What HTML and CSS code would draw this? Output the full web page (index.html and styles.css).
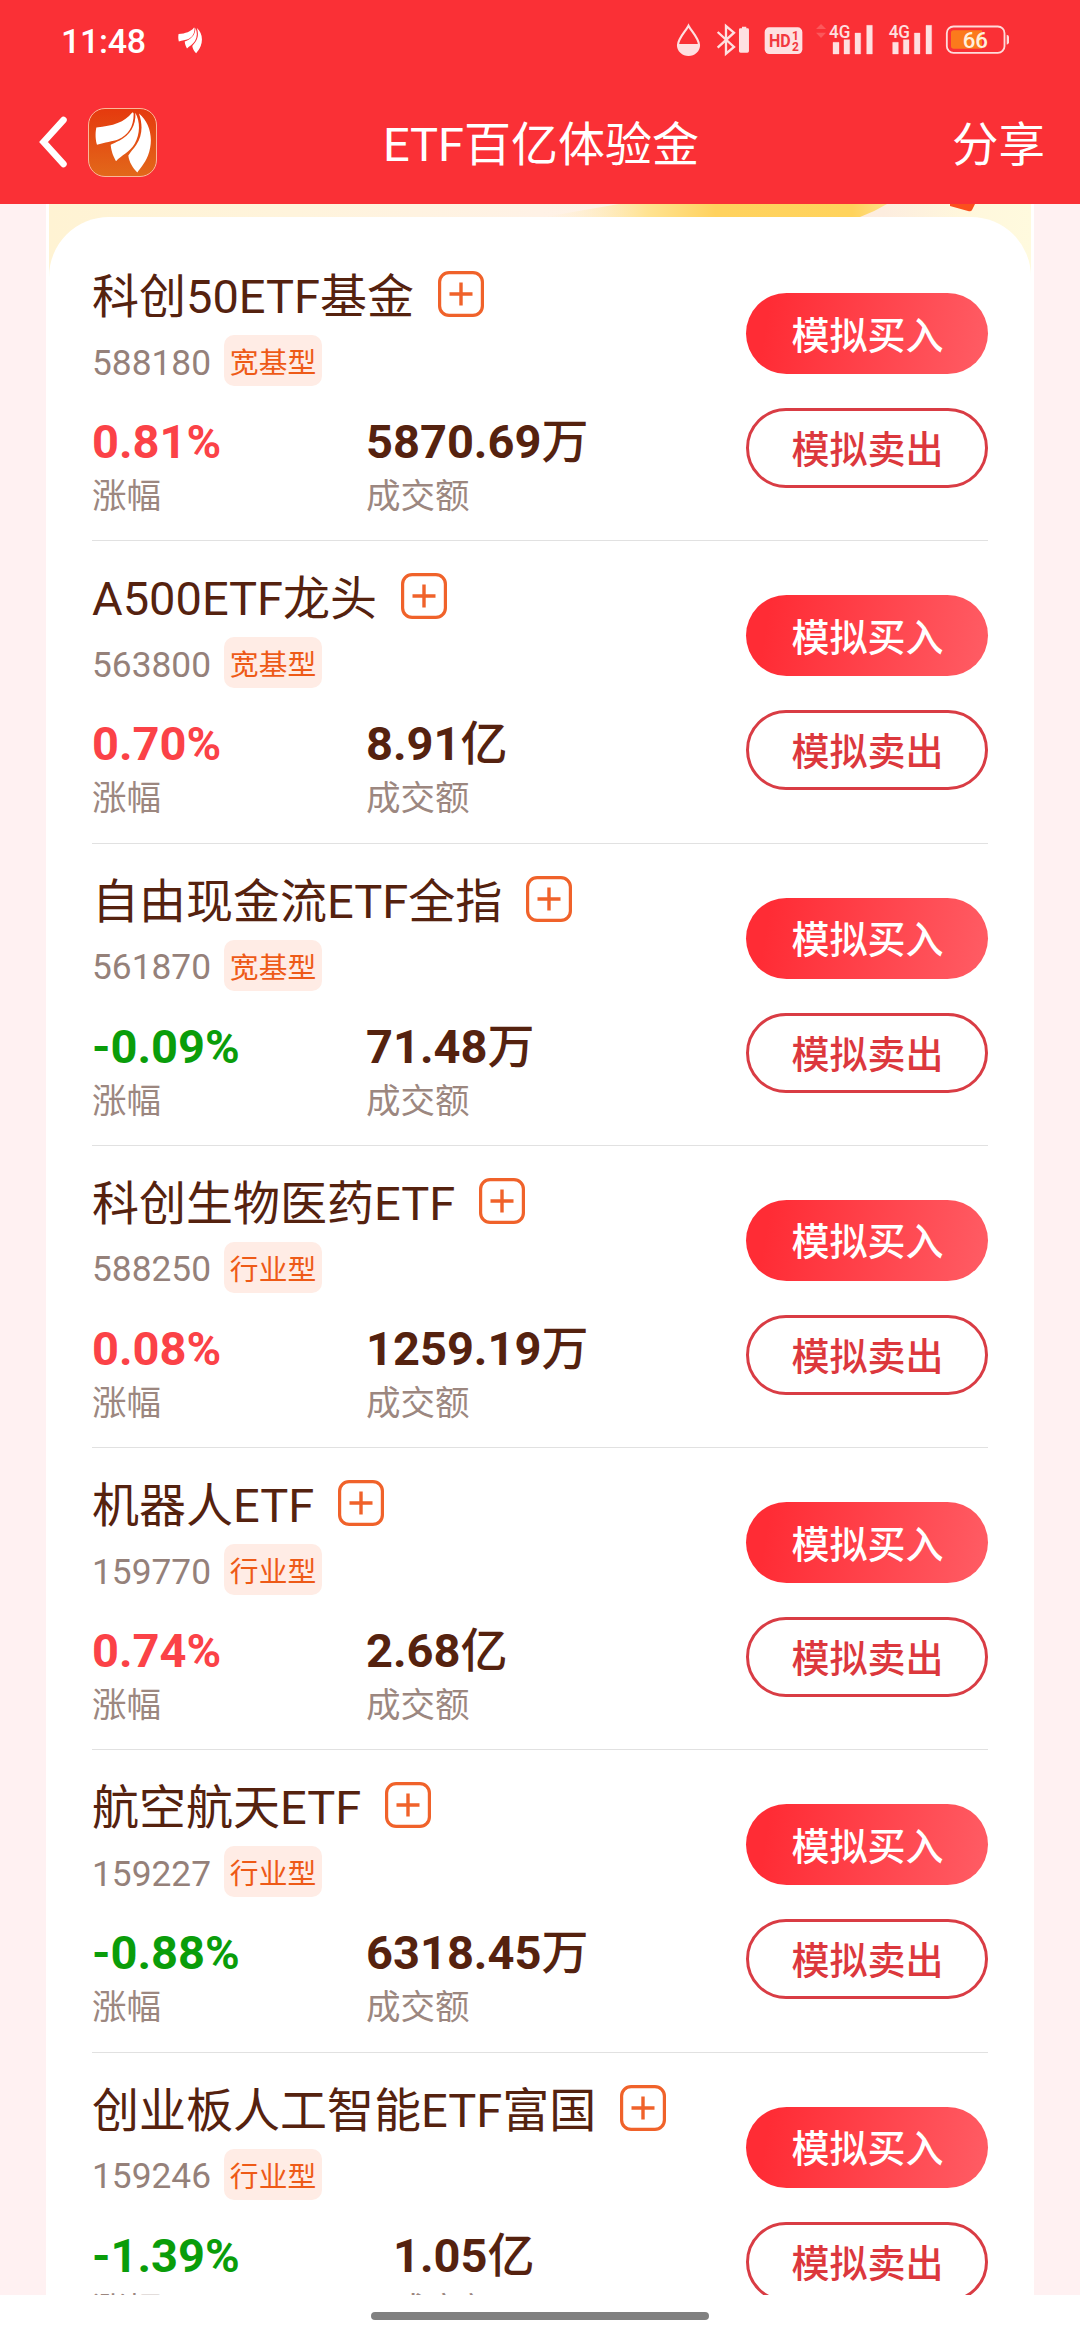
FILE: index.html
```html
<!DOCTYPE html>
<html lang="zh-CN">
<head>
<meta charset="utf-8">
<title>ETF百亿体验金</title>
<link rel="stylesheet" href="styles.css">
</head>
<body>
<svg class="defs" aria-hidden="true">
  <symbol id="plus" viewBox="0 0 46 46">
    <rect x="1.6" y="1.6" width="42.8" height="42.8" rx="9.5" fill="none" stroke="#f0622a" stroke-width="3.2"/>
    <path d="M23 11.5V34.5M11.500 23H34.500" fill="none" stroke="#f0622a" stroke-width="3.400"/>
  </symbol>
  <symbol id="wings" viewBox="16 10 168 182">
    <path d="M127 12C105 40 70 52 20 56C16 75 18 95 22 108C45 100 70 98 85 92C115 80 132 55 132 15C131 10 128 10 127 12Z"/>
    <path d="M137 12C140 50 120 80 90 95C75 102 68 105 63 108C65 130 72 145 79 157C95 140 120 130 135 105C152 75 152 40 137 12Z"/>
    <path d="M148 14C160 50 158 80 140 108C132 120 122 130 116 140C118 160 130 178 143 191C150 180 165 165 175 140C194 90 180 40 148 14Z"/>
  </symbol>
</svg>
<div class="screen">
  <header class="top">
    <div class="status">
      <div class="status-left">
        <span class="clock">11:48</span>
        <svg class="notify" fill="#fff"><use href="#wings"/></svg>
      </div>
      <div class="status-right">
        <svg width="30" height="34" viewBox="48 40 90 102">
          <path d="M85.500 48C76 66 54 86 54 106A31.500 30 0 0 0 117 106C117 86 95 66 85.500 48Z" fill="none" stroke="#fee0e1" stroke-width="6.500"/>
          <path d="M53 103H118A32 32 0 0 1 53 103Z" fill="#fee0e1"/>
        </svg>
        <svg width="38.300" height="34" viewBox="168 40 115 102">
          <path d="M173 67L222 112L198 132V49L222 69L173 114" fill="none" stroke="#fee0e1" stroke-width="7"/>
          <path d="M246 51H259V56H263Q267 56 267 60V124Q267 129 262 129H242Q237 129 237 124V60Q237 56 241 56H246Z" fill="#fee0e1"/>
        </svg>
        <svg width="40.700" height="34" viewBox="313 40 122 102">
          <rect x="315" y="53" width="113" height="80" rx="14" fill="#fee0e1"/>
          <text x="328" y="113" class="hd" font-size="56" textLength="65" lengthAdjust="spacingAndGlyphs">HD</text>
          <text x="397" y="92" class="hd" font-size="36">1</text>
          <text x="397" y="123" class="hd" font-size="36">2</text>
        </svg>
        <svg width="62.700" height="44" viewBox="465 25 188 132">
          <path d="M468 58L483 43L498 58ZM468 69L483 85L498 69Z" fill="#fb585b"/>
          <text x="507" y="84" class="net" font-size="57" textLength="64" lengthAdjust="spacingAndGlyphs">4G</text>
          <path d="M519 98H537V133H519ZM552 90H569V133H552ZM585 70H602V133H585ZM620 47H637V133H620Z" fill="#fee0e1" stroke="#fee0e1" stroke-linejoin="round"/>
        </svg>
        <svg width="47.300" height="44" viewBox="683 25 142 132">
          <text x="685" y="84" class="net" font-size="57" textLength="64" lengthAdjust="spacingAndGlyphs">4G</text>
          <path d="M697 98H714V133H697ZM729 90H746V133H729ZM762 70H779V133H762ZM797 47H814V133H797Z" fill="#fee0e1" stroke="#fee0e1" stroke-linejoin="round"/>
        </svg>
        <svg width="65" height="34" viewBox="855 40 195 102">
          <rect x="860.500" y="50.500" width="173" height="79" rx="20" fill="none" stroke="#fedcdb" stroke-width="5.500"/>
          <path d="M881 62H966V117H881Q873 117 873 109V70Q873 62 881 62Z" fill="#fb7a1c"/>
          <path d="M1040 75Q1047 76 1047 82V98Q1047 104 1040 105Z" fill="#fedcdb"/>
          <text x="908" y="115" class="pct" font-size="67" textLength="76" lengthAdjust="spacingAndGlyphs">66</text>
        </svg>
      </div>
    </div>
    <nav class="nav">
      <div class="nav-left">
        <svg class="back" viewBox="0 0 32 54"><path d="M26.500 5L6.500 27L26.500 49" fill="none" stroke="#fff" stroke-width="6.500" stroke-linecap="round"/></svg>
        <span class="logo"><svg fill="#fff"><use href="#wings"/></svg></span>
      </div>
      <h1 class="nav-title">ETF百亿体验金</h1>
      <span class="share">分享</span>
    </nav>
  </header>

  <main class="page">
    <div class="sheet">
      <svg class="banner" viewBox="0 0 982 73" preserveAspectRatio="none">
        <defs>
          <linearGradient id="cream"><stop offset="0" stop-color="#fff3d3"/><stop offset=".25" stop-color="#fff4dc"/><stop offset=".5" stop-color="#fff2e6"/><stop offset=".85" stop-color="#fdeddf"/><stop offset=".93" stop-color="#fff7dc"/><stop offset="1" stop-color="#fffade"/></linearGradient>
          <linearGradient id="gold"><stop offset="0" stop-color="#fff0cc" stop-opacity="0"/><stop offset=".3" stop-color="#ffe392"/><stop offset=".5" stop-color="#ffd25e"/><stop offset=".9" stop-color="#ffd35c"/><stop offset="1" stop-color="#ffe08a"/></linearGradient>
        </defs>
        <rect width="982" height="73" fill="url(#cream)"/>
        <path d="M570 0H838Q825 8 811 13H495Z" fill="url(#gold)"/>
        <path d="M901 0H926L923 6Q922 8 919 7L901 2Z" fill="#fb4f1d"/>
      </svg>
      <section class="list">
        <article class="fund">
          <div class="info">
            <div class="name"><h2>科创50ETF基金</h2><svg class="add"><use href="#plus"/></svg></div>
            <div class="meta"><span class="code">588180</span><span class="tag">宽基型</span></div>
            <div class="stats"><div class="stat"><b class="up">0.81%</b><span>涨幅</span></div><div class="stat"><b>5870.69<i>万</i></b><span>成交额</span></div></div>
          </div>
          <div class="actions"><button class="buy">模拟买入</button><button class="sell">模拟卖出</button></div>
        </article>
        <article class="fund">
          <div class="info">
            <div class="name"><h2>A500ETF龙头</h2><svg class="add"><use href="#plus"/></svg></div>
            <div class="meta"><span class="code">563800</span><span class="tag">宽基型</span></div>
            <div class="stats"><div class="stat"><b class="up">0.70%</b><span>涨幅</span></div><div class="stat"><b>8.91<i>亿</i></b><span>成交额</span></div></div>
          </div>
          <div class="actions"><button class="buy">模拟买入</button><button class="sell">模拟卖出</button></div>
        </article>
        <article class="fund">
          <div class="info">
            <div class="name"><h2>自由现金流ETF全指</h2><svg class="add"><use href="#plus"/></svg></div>
            <div class="meta"><span class="code">561870</span><span class="tag">宽基型</span></div>
            <div class="stats"><div class="stat"><b class="down">-0.09%</b><span>涨幅</span></div><div class="stat"><b>71.48<i>万</i></b><span>成交额</span></div></div>
          </div>
          <div class="actions"><button class="buy">模拟买入</button><button class="sell">模拟卖出</button></div>
        </article>
        <article class="fund">
          <div class="info">
            <div class="name"><h2>科创生物医药ETF</h2><svg class="add"><use href="#plus"/></svg></div>
            <div class="meta"><span class="code">588250</span><span class="tag">行业型</span></div>
            <div class="stats"><div class="stat"><b class="up">0.08%</b><span>涨幅</span></div><div class="stat"><b>1259.19<i>万</i></b><span>成交额</span></div></div>
          </div>
          <div class="actions"><button class="buy">模拟买入</button><button class="sell">模拟卖出</button></div>
        </article>
        <article class="fund">
          <div class="info">
            <div class="name"><h2>机器人ETF</h2><svg class="add"><use href="#plus"/></svg></div>
            <div class="meta"><span class="code">159770</span><span class="tag">行业型</span></div>
            <div class="stats"><div class="stat"><b class="up">0.74%</b><span>涨幅</span></div><div class="stat"><b>2.68<i>亿</i></b><span>成交额</span></div></div>
          </div>
          <div class="actions"><button class="buy">模拟买入</button><button class="sell">模拟卖出</button></div>
        </article>
        <article class="fund">
          <div class="info">
            <div class="name"><h2>航空航天ETF</h2><svg class="add"><use href="#plus"/></svg></div>
            <div class="meta"><span class="code">159227</span><span class="tag">行业型</span></div>
            <div class="stats"><div class="stat"><b class="down">-0.88%</b><span>涨幅</span></div><div class="stat"><b>6318.45<i>万</i></b><span>成交额</span></div></div>
          </div>
          <div class="actions"><button class="buy">模拟买入</button><button class="sell">模拟卖出</button></div>
        </article>
        <article class="fund fund-wide">
          <div class="info">
            <div class="name"><h2>创业板人工智能ETF富国</h2><svg class="add"><use href="#plus"/></svg></div>
            <div class="meta"><span class="code">159246</span><span class="tag">行业型</span></div>
            <div class="stats"><div class="stat"><b class="down">-1.39%</b><span>涨幅</span></div><div class="stat"><b>1.05<i>亿</i></b><span>成交额</span></div></div>
          </div>
          <div class="actions"><button class="buy">模拟买入</button><button class="sell">模拟卖出</button></div>
        </article>
      </section>
    </div>
  </main>
  <footer class="gesture"><span class="pill"></span></footer>
</div>
</body>
</html>
```
FILE: styles.css
```css
* { box-sizing: border-box; }
html, body { margin: 0; padding: 0; }
body {
  font-family: Roboto, "Noto Sans CJK SC", sans-serif;
  color: #55220f;
  background: #fff;
}
h1, h2 { margin: 0; font-weight: 400; }
.defs { display: none; }
.screen {
  width: 1080px;
  height: 2340px;
  display: flex;
  flex-direction: column;
  overflow: hidden;
}

/* header */
.top { flex: none; height: 204px; background: #fa3036; color: #fff; }
.status {
  height: 80px;
  display: flex;
  justify-content: space-between;
  align-items: center;
  padding: 0 70px 0 61px;
}
.status-left { display: flex; align-items: center; gap: 32px; }
.clock { font-size: 34px; font-weight: 500; line-height: 40px; padding-top: 2px; letter-spacing: -0.3px; }
.notify { width: 24px; height: 27px; }
.status-right { display: flex; align-items: center; gap: 10px; }
.status-right svg { display: block; }
.hd { fill: #f2383e; font-weight: 700; }
.net { fill: #fee0e1; font-weight: 500; }
.pct { fill: #fff0dc; font-weight: 500; }
.nav {
  height: 124px;
  display: grid;
  grid-template-columns: 1fr auto 1fr;
  align-items: center;
  padding: 0 35px 0 37px;
  font-size: 47px;
  line-height: 60px;
}
.nav-left { display: flex; align-items: center; gap: 19px; }
.back { width: 32px; height: 54px; }
.logo {
  width: 69px;
  height: 69px;
  border: 1px solid #fbb79b;
  border-radius: 17px;
  background: linear-gradient(#e53a0e, #e2681a);
  display: flex;
  align-items: center;
  justify-content: center;
}
.logo svg { width: 56px; height: 61px; }
.nav-title { font-size: 47px; padding-top: 6px; }
.share { justify-self: end; font-size: 46.500px; padding-top: 6px; }

/* list */
.page {
  flex: 1;
  min-height: 0;
  overflow: hidden;
  background: #fff1f2;
  padding: 0 46px;
}
.sheet { background: #fff; padding: 0 3px; }
.banner { display: block; width: 100%; height: 73px; }
.list {
  margin-top: -60px;
  position: relative;
  background: #fff;
  border-radius: 60px 60px 0 0;
  padding: 22px 43px 0;
}
.fund {
  height: 302.3px;
  border-bottom: 1px solid #e1e1e1;
  display: flex;
  justify-content: space-between;
}
.info { padding-top: 32px; }
.name { display: flex; gap: 24px; height: 46px; }
.name h2 { font-size: 47px; line-height: 46px; padding-top: 3px; white-space: nowrap; }
.add { width: 46px; height: 46px; flex: none; }
.meta { display: flex; align-items: center; gap: 13px; margin-top: 18px; height: 51px; }
.code { font-size: 35.300px; line-height: 46px; padding-top: 4px; color: #95817a; }
.tag {
  width: 98px;
  height: 51px;
  border-radius: 10px;
  background: #ffece5;
  color: #ee5a17;
  font-size: 28.800px;
  line-height: 51px;
  padding-top: 3px;
  text-align: center;
}
.stats { display: grid; grid-template-columns: 274px auto; margin-top: 28px; }
.fund-wide .stats { grid-template-columns: 301px auto; }
.stat { display: flex; flex-direction: column; }
.stat b { font-size: 47px; line-height: 54px; font-weight: 700; padding-top: 1px; white-space: nowrap; }
.stat i { font-style: normal; font-weight: 500; }
.stat span { font-size: 34.500px; line-height: 46px; margin-top: 4px; color: #9c8780; font-weight: 400; }
.stat .up { color: #fb4247; }
.stat .down { color: #0a9d0a; }
.actions { display: flex; flex-direction: column; gap: 34px; padding-top: 54px; }
.actions button {
  width: 242px;
  height: 81px;
  border: 0;
  border-radius: 41px;
  padding: 4px 0 0 1px;
  font: 500 38px/1 Roboto, "Noto Sans CJK SC", sans-serif;
}
.actions .buy { color: #fff; background: linear-gradient(100deg, #ff2c35 10%, #ff5a62 95%); }
.actions .sell { height: 80px; color: #dc383d; background: #fff; border: 3px solid #d93c44; }

/* gesture bar */
.gesture { flex: none; height: 45px; display: flex; justify-content: center; padding-top: 17px; }
.pill { width: 338px; height: 8px; border-radius: 4px; background: #808080; }
```
